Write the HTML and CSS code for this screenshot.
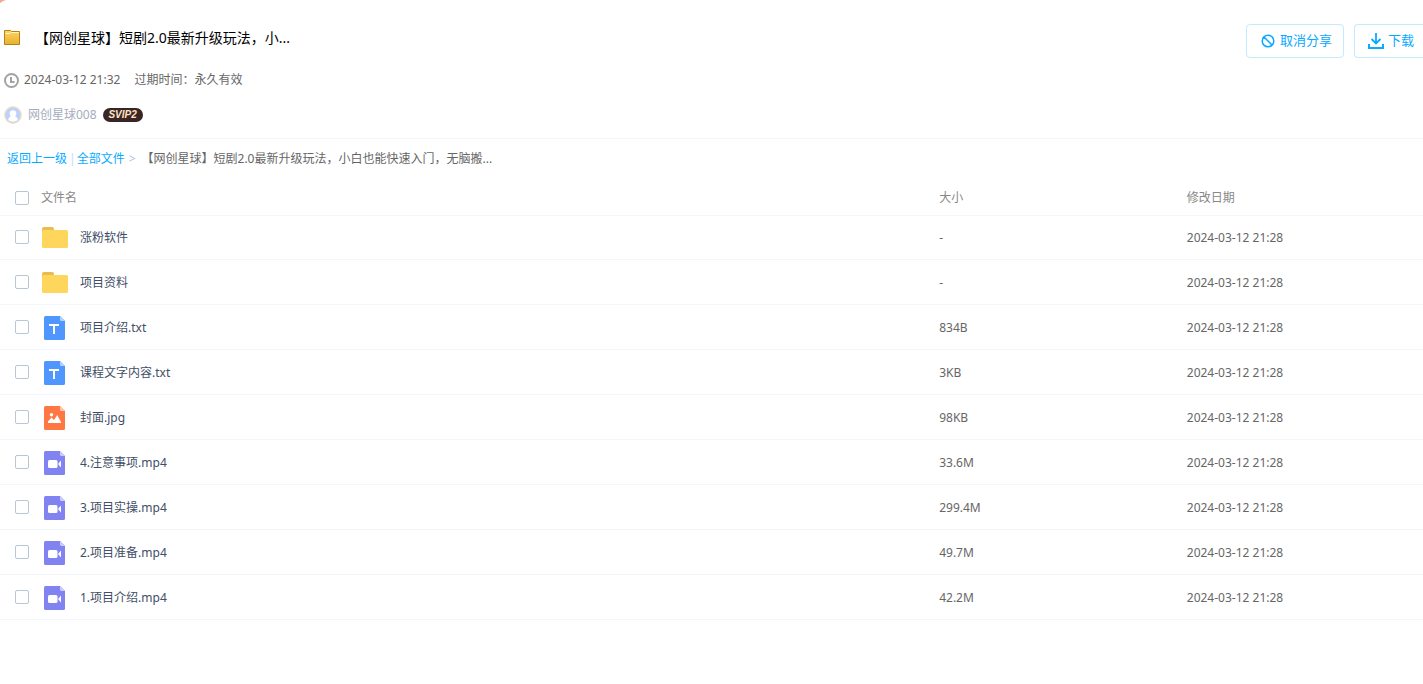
FILE: index.html
```html
<!DOCTYPE html>
<html lang="zh-CN">
<head>
<meta charset="utf-8">
<title>网创星球 - 分享文件</title>
<link rel="stylesheet" href="styles.css">
</head>
<body>
<svg class="symbols" aria-hidden="true">
  <symbol id="i-folder" viewBox="0 0 26 22">
    <path d="M0 2Q0 0 2 0H10Q12 0 12 2V8H0Z" fill="#e9bd4c"/>
    <rect y="3" width="26" height="18" rx="1.500" fill="#ffd65c"/>
  </symbol>
  <symbol id="i-txt" viewBox="0 0 21 24">
    <path d="M1.500 0H16L21 5V22.500Q21 24 19.500 24H1.500Q0 24 0 22.500V1.500Q0 0 1.500 0Z" fill="#4f97ff"/>
    <path d="M16 0L21 5H17.500Q16 5 16 3.500Z" fill="#b5d3ff"/>
    <path d="M5 8H15V10H11V18H9V10H5Z" fill="#fff"/>
  </symbol>
  <symbol id="i-img" viewBox="0 0 21 24">
    <path d="M1.500 0H16L21 5V22.500Q21 24 19.500 24H1.500Q0 24 0 22.500V1.500Q0 0 1.500 0Z" fill="#ff7843"/>
    <path d="M16 0L21 5H17.500Q16 5 16 3.500Z" fill="#ffc5ad"/>
    <circle cx="7.500" cy="8.700" r="1.700" fill="#fff"/>
    <path d="M4 17V15.500L7.500 11.500L10 14L13.200 9L17 16V17Z" fill="#fff"/>
  </symbol>
  <symbol id="i-video" viewBox="0 0 21 24">
    <path d="M1.500 0H16L21 5V22.500Q21 24 19.500 24H1.500Q0 24 0 22.500V1.500Q0 0 1.500 0Z" fill="#8183f1"/>
    <path d="M16 0L21 5H17.500Q16 5 16 3.500Z" fill="#cbccfa"/>
    <rect x="4" y="9" width="9.500" height="8" rx="1.500" fill="#fff"/>
    <path d="M14 13L17 9.500V16.500Z" fill="#fff"/>
  </symbol>
</svg>
<svg class="corner" viewBox="0 0 6 3" aria-hidden="true"><path d="M0 0H6Q3 .3 0 3Z" fill="#f4a58c"/></svg>

<header class="share">
  <div class="share-top">
    <h1 class="share-title">
      <svg class="title-icon" viewBox="0 0 16 16" aria-hidden="true">
        <defs><linearGradient id="gold" x2="0" y2="1"><stop stop-color="#fbd562"/><stop offset="1" stop-color="#e9b02e"/></linearGradient></defs>
        <path d="M.5 14.500V.5H6.500L7.500 1.500H15.500V14.500Z" fill="url(#gold)" stroke="#b98216"/>
        <path d="M1.500 3.500H6L7 2.500H15" fill="none" stroke="#fff3c4"/>
      </svg>
      <span>【网创星球】短剧2.0最新升级玩法，小...</span>
    </h1>
    <div class="actions">
      <button class="btn" type="button">
        <svg class="ic-cancel" viewBox="0 0 14 14" aria-hidden="true"><path d="M2.800 2.800L11.200 11.200M7 1.200A5.800 5.800 0 1 1 7 12.800A5.800 5.800 0 1 1 7 1.200Z" fill="none" stroke="#09aaff" stroke-width="1.500"/></svg><span>取消分享</span>
      </button>
      <button class="btn btn-edge" type="button">
        <svg class="ic-down" viewBox="0 0 16 16" aria-hidden="true"><path d="M8 0V10M3.500 6L8 10.500L12.500 6" fill="none" stroke="#09aaff" stroke-width="1.800"/><path d="M1 11V15H15V11" fill="none" stroke="#09aaff" stroke-width="2"/></svg><span>下载</span>
      </button>
    </div>
  </div>
  <div class="meta">
    <svg class="ic-clock" viewBox="0 0 15 15" aria-hidden="true"><circle cx="7.500" cy="7.500" r="6.500" fill="none" stroke="#a3a3a3" stroke-width="2"/><path d="M7 4V9H10.500" fill="none" stroke="#a3a3a3" stroke-width="2"/></svg>
    <span>2024-03-12 21:32</span>
    <span class="expire">过期时间：永久有效</span>
  </div>
  <div class="owner">
    <svg class="avatar" viewBox="0 0 18 18" aria-hidden="true"><circle cx="9" cy="9" r="8.400" fill="#bcd2fb" stroke="#fbe3bd" stroke-width="1.200"/><circle cx="9" cy="7.500" r="3.300" fill="#fff"/><path d="M4 14Q5 10.500 7.500 10H10.500Q13 10.500 14 14Q9 17.500 4 14Z" fill="#fff"/></svg>
    <span>网创星球008</span>
    <span class="vip">SVIP2</span>
  </div>
</header>

<nav class="crumbs">
  <a href="#">返回上一级</a><span class="bar">|</span><a href="#">全部文件</a><span class="gt">&gt;</span><span>【网创星球】短剧2.0最新升级玩法，小白也能快速入门，无脑搬...</span>
</nav>

<table class="files">
  <thead>
    <tr><th class="c-name"><div class="cell"><input class="check" type="checkbox" aria-label="全选"><span>文件名</span></div></th><th class="c-size">大小</th><th class="c-date">修改日期</th></tr>
  </thead>
  <tbody>
    <tr><td><div class="cell"><input class="check" type="checkbox" id="f1"><svg class="kind"><use href="#i-folder"/></svg><label for="f1">涨粉软件</label></div></td><td>-</td><td>2024-03-12 21:28</td></tr>
    <tr><td><div class="cell"><input class="check" type="checkbox" id="f2"><svg class="kind"><use href="#i-folder"/></svg><label for="f2">项目资料</label></div></td><td>-</td><td>2024-03-12 21:28</td></tr>
    <tr><td><div class="cell"><input class="check" type="checkbox" id="f3"><svg class="kind doc"><use href="#i-txt"/></svg><label for="f3">项目介绍.txt</label></div></td><td>834B</td><td>2024-03-12 21:28</td></tr>
    <tr><td><div class="cell"><input class="check" type="checkbox" id="f4"><svg class="kind doc"><use href="#i-txt"/></svg><label for="f4">课程文字内容.txt</label></div></td><td>3KB</td><td>2024-03-12 21:28</td></tr>
    <tr><td><div class="cell"><input class="check" type="checkbox" id="f5"><svg class="kind doc"><use href="#i-img"/></svg><label for="f5">封面.jpg</label></div></td><td>98KB</td><td>2024-03-12 21:28</td></tr>
    <tr><td><div class="cell"><input class="check" type="checkbox" id="f6"><svg class="kind doc"><use href="#i-video"/></svg><label for="f6">4.注意事项.mp4</label></div></td><td>33.6M</td><td>2024-03-12 21:28</td></tr>
    <tr><td><div class="cell"><input class="check" type="checkbox" id="f7"><svg class="kind doc"><use href="#i-video"/></svg><label for="f7">3.项目实操.mp4</label></div></td><td>299.4M</td><td>2024-03-12 21:28</td></tr>
    <tr><td><div class="cell"><input class="check" type="checkbox" id="f8"><svg class="kind doc"><use href="#i-video"/></svg><label for="f8">2.项目准备.mp4</label></div></td><td>49.7M</td><td>2024-03-12 21:28</td></tr>
    <tr><td><div class="cell"><input class="check" type="checkbox" id="f9"><svg class="kind doc"><use href="#i-video"/></svg><label for="f9">1.项目介绍.mp4</label></div></td><td>42.2M</td><td>2024-03-12 21:28</td></tr>
  </tbody>
</table>
</body>
</html>
```
FILE: styles.css
```css
* { box-sizing: border-box; }
body {
  margin: 0;
  background: #fff;
  color: #666;
  font: 12px/18px "Noto Sans", "Noto Sans CJK SC", sans-serif;
}
svg { flex: none; display: block; }
.symbols { position: absolute; width: 0; height: 0; }
.corner { position: absolute; top: 0; left: 0; width: 6px; height: 3px; }

.share { padding: 24px 0 14px; border-bottom: 1px solid #f2f6fd; }
.share-top { display: flex; justify-content: space-between; height: 34px; }
.share-title {
  display: flex;
  align-items: center;
  gap: 15px;
  margin: 0;
  padding-left: 4px;
  height: 28px;
  color: #000;
  font-size: 14px;
  font-weight: 400;
  white-space: nowrap;
}
.title-icon { width: 16px; height: 16px; }
.actions { display: flex; gap: 10px; }
.btn {
  display: flex;
  align-items: center;
  justify-content: center;
  height: 34px;
  padding: 0 11px 0 14px;
  gap: 5px;
  background: #fff;
  border: 1px solid #c3eaff;
  border-radius: 4px;
  color: #09aaff;
  font: 13px/18px "Noto Sans", "Noto Sans CJK SC", sans-serif;
  white-space: nowrap;
}
.btn span { padding-bottom: 3px; }
.btn-edge {
  gap: 4px;
  padding: 0 9px 0 13px;
  border-right: 0;
  border-radius: 4px 0 0 4px;
}
.ic-cancel { width: 14px; height: 14px; }
.ic-down { width: 16px; height: 16px; }

.meta { display: flex; align-items: center; gap: 5px; padding: 13px 0 0 4px; }
.ic-clock { width: 15px; height: 15px; }
.expire { margin-left: 9px; }
.owner { display: flex; align-items: center; gap: 6px; padding: 17px 0 0 4px; color: #a5acbd; }
.avatar { width: 18px; height: 18px; }
.vip {
  width: 40px;
  height: 14px;
  border-radius: 7px;
  background: #3a2526;
  color: #ffe3c0;
  font: italic 700 10px/14px "Liberation Sans", sans-serif;
  text-align: center;
}

.crumbs { display: flex; padding: 11px 7px 10px; white-space: nowrap; }
.crumbs a { color: #09aaff; text-decoration: none; }
.bar { padding: 0 1px 0 2px; color: #c4dbfe; }
.gt { padding: 0 6px 0 4px; color: #a9c4ea; }

.files { width: 100%; border-collapse: separate; border-spacing: 0; table-layout: fixed; }
.files th, .files td { padding: 0; text-align: left; font-weight: 400; border-bottom: 1px solid #f2f6fd; }
.files th { height: 38px; padding-top: 2px; color: #888; }
.files td { height: 45px; padding-top: 2px; }
.files tbody tr:first-child td { height: 44px; padding-top: 1px; }
.c-name { width: 66%; }
.c-size { width: 17.4%; }
.cell { display: flex; align-items: center; padding-left: 15px; }
.check {
  appearance: none;
  flex: none;
  width: 14px;
  height: 14px;
  margin: 0 12px 0 0;
  background: #fff;
  border: 1px solid #b9c6d6;
  border-radius: 2px;
}
.files td .check { margin-bottom: 2px; }
.check:checked { background: #09aaff; }
.kind { width: 28px; height: 22px; margin-right: 11px; }
.kind.doc { width: 21px; height: 24px; margin: 0 15px 0 3px; }
.cell label { color: #424e67; }
```
